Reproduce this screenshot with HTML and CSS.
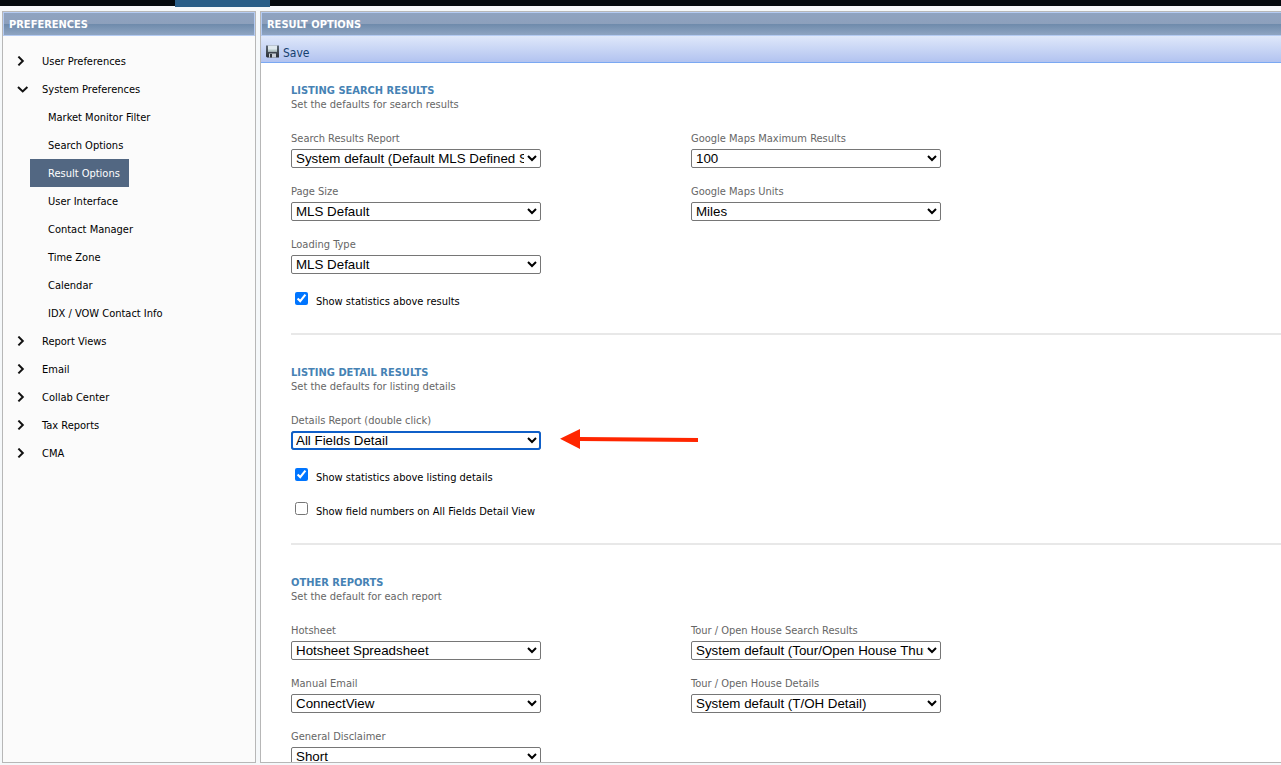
FILE: index.html
```html
<!DOCTYPE html>
<html lang="en">
<head>
    <meta charset="UTF-8">
    <meta name="viewport" content="width=device-width, initial-scale=1.0">
    <title>Preferences - Result Options</title>
    <link rel="stylesheet" href="styles.css">
</head>
<body>
<svg class="sprite" aria-hidden="true">
    <symbol id="chevron-right" viewBox="0 0 12 12">
        <path d="M1.4 0.6 L5.8 5 L1.4 9.4" fill="none" stroke="#111" stroke-width="2"/>
    </symbol>
    <symbol id="chevron-down" viewBox="0 0 12 12">
        <path d="M1 3 L5.7 7.4 L10.4 3" fill="none" stroke="#111" stroke-width="2"/>
    </symbol>
</svg>

<header class="topbar">
    <div class="topbar-tab"></div>
</header>

<div class="layout">
    <aside class="panel sidebar">
        <h2 class="panel-header">PREFERENCES</h2>
        <nav class="menu">
            <a class="menu-item" href="#"><svg class="chevron"><use href="#chevron-right"/></svg>User Preferences</a>
            <a class="menu-item" href="#"><svg class="chevron"><use href="#chevron-down"/></svg>System Preferences</a>
            <div class="submenu">
                <a class="submenu-item" href="#">Market Monitor Filter</a>
                <a class="submenu-item" href="#">Search Options</a>
                <a class="submenu-item active" href="#">Result Options</a>
                <a class="submenu-item" href="#">User Interface</a>
                <a class="submenu-item" href="#">Contact Manager</a>
                <a class="submenu-item" href="#">Time Zone</a>
                <a class="submenu-item" href="#">Calendar</a>
                <a class="submenu-item" href="#">IDX / VOW Contact Info</a>
            </div>
            <a class="menu-item" href="#"><svg class="chevron"><use href="#chevron-right"/></svg>Report Views</a>
            <a class="menu-item" href="#"><svg class="chevron"><use href="#chevron-right"/></svg>Email</a>
            <a class="menu-item" href="#"><svg class="chevron"><use href="#chevron-right"/></svg>Collab Center</a>
            <a class="menu-item" href="#"><svg class="chevron"><use href="#chevron-right"/></svg>Tax Reports</a>
            <a class="menu-item" href="#"><svg class="chevron"><use href="#chevron-right"/></svg>CMA</a>
        </nav>
    </aside>

    <main class="panel content">
        <h2 class="panel-header">RESULT OPTIONS</h2>
        <div class="toolbar">
            <button class="save-button" type="button">
                <svg class="save-icon" viewBox="0 0 13 13" aria-hidden="true">
                    <defs>
                        <linearGradient id="disk" x1="0" y1="0" x2="0" y2="1">
                            <stop offset="0" stop-color="#5b6673"/>
                            <stop offset="1" stop-color="#2b2f36"/>
                        </linearGradient>
                    </defs>
                    <path d="M0 0.5 H13 V12.5 H1 L0 11.5 Z" fill="url(#disk)"/>
                    <rect x="2" y="0.5" width="9" height="6" fill="#dfe8ee"/>
                    <rect x="2" y="4.5" width="9" height="2" fill="#b9c9c9"/>
                    <rect x="3" y="8.5" width="7" height="4" fill="#c9ced6"/>
                    <rect x="4" y="9" width="2" height="3.5" fill="#30353d"/>
                </svg>
                Save
            </button>
        </div>

        <form class="options">
            <section class="section">
                <h3>LISTING SEARCH RESULTS</h3>
                <p class="description">Set the defaults for search results</p>
                <div class="fields">
                    <div class="field">
                        <label for="search-report">Search Results Report</label>
                        <select id="search-report"><option>System default (Default MLS Defined Spreadsheet)</option></select>
                    </div>
                    <div class="field">
                        <label for="maps-max">Google Maps Maximum Results</label>
                        <select id="maps-max"><option>100</option></select>
                    </div>
                    <div class="field">
                        <label for="page-size">Page Size</label>
                        <select id="page-size"><option>MLS Default</option></select>
                    </div>
                    <div class="field">
                        <label for="maps-units">Google Maps Units</label>
                        <select id="maps-units"><option>Miles</option></select>
                    </div>
                    <div class="field">
                        <label for="loading-type">Loading Type</label>
                        <select id="loading-type"><option>MLS Default</option></select>
                    </div>
                </div>
                <div class="checks">
                    <label class="check"><input type="checkbox" checked><span>Show statistics above results</span></label>
                </div>
            </section>

            <section class="section">
                <h3>LISTING DETAIL RESULTS</h3>
                <p class="description">Set the defaults for listing details</p>
                <div class="fields">
                    <div class="field">
                        <label for="details-report">Details Report (double click)</label>
                        <select id="details-report" class="focused"><option>All Fields Detail</option></select>
                        <svg class="arrow" viewBox="0 0 138 20" aria-hidden="true">
                            <path d="M0 9.7 L20 0 V8 L138 9 V13 L20 12 V20 Z" fill="#ff2600"/>
                        </svg>
                    </div>
                </div>
                <div class="checks">
                    <label class="check"><input type="checkbox" checked><span>Show statistics above listing details</span></label>
                    <label class="check"><input type="checkbox"><span>Show field numbers on All Fields Detail View</span></label>
                </div>
            </section>

            <section class="section">
                <h3>OTHER REPORTS</h3>
                <p class="description">Set the default for each report</p>
                <div class="fields">
                    <div class="field">
                        <label for="hotsheet">Hotsheet</label>
                        <select id="hotsheet"><option>Hotsheet Spreadsheet</option></select>
                    </div>
                    <div class="field">
                        <label for="tour-results">Tour / Open House Search Results</label>
                        <select id="tour-results"><option>System default (Tour/Open House Thumbnail)</option></select>
                    </div>
                    <div class="field">
                        <label for="manual-email">Manual Email</label>
                        <select id="manual-email"><option>ConnectView</option></select>
                    </div>
                    <div class="field">
                        <label for="tour-details">Tour / Open House Details</label>
                        <select id="tour-details"><option>System default (T/OH Detail)</option></select>
                    </div>
                    <div class="field">
                        <label for="disclaimer">General Disclaimer</label>
                        <select id="disclaimer"><option>Short</option></select>
                    </div>
                </div>
            </section>
        </form>
    </main>
</div>
</body>
</html>
```
FILE: styles.css
```css
* {
    box-sizing: border-box;
}

body {
    display: flex;
    flex-direction: column;
    height: 100vh;
    margin: 0;
    overflow: hidden;
    font-family: Tahoma, "DejaVu Sans Condensed", "Noto Sans", sans-serif;
    font-size: 11px;
    line-height: 14px;
    color: #000;
    background-color: #f5f8fa;
}

h2, h3, p {
    margin: 0;
    font-size: inherit;
}

.sprite {
    display: none;
}

/* top bar */
.topbar {
    height: 6px;
    flex: none;
    background-color: #03090e;
}

.topbar-tab {
    width: 95px;
    height: 7px;
    margin-left: 175px;
    background-color: #285d87;
}

/* panels */
.layout {
    display: flex;
    flex: 1;
    gap: 4px;
    min-height: 0;
    padding: 5px 0 2px 2px;
}

.panel {
    border: 1px solid #b7b7b7;
    overflow: hidden;
}

.sidebar {
    flex: none;
    width: 254px;
    background-color: #fbfbfb;
}

.content {
    flex: 1;
    border-right: none;
    background-color: #fff;
}

.panel-header {
    height: 24px;
    padding: 5px 5px 3px;
    border: 1px solid #b4cbf2;
    color: #fff;
    background: linear-gradient(#8fa3c0 0, #8da0bc 50%, #6e8aab 50%, #8fa5c2 100%);
}

.content .panel-header {
    border-right: none;
}

/* side menu */
.menu {
    padding-top: 11px;
}

.menu a {
    color: #000;
    text-decoration: none;
}

.menu-item {
    display: flex;
    align-items: center;
    gap: 13px;
    height: 28px;
    padding: 2px 0 0 14px;
}

.chevron {
    width: 12px;
    height: 12px;
}

.submenu {
    display: flex;
    flex-direction: column;
    align-items: flex-start;
    padding-left: 27px;
}

.submenu-item {
    padding: 8px 9px 6px 18px;
}

.menu .active {
    color: #fff;
    background-color: #526782;
}

/* toolbar */
.toolbar {
    height: 27px;
    padding: 7px 5px 0;
    border-bottom: 1px solid #7aa8f2;
    background: linear-gradient(#dfe8fa, #b2c3f0);
}

.save-button {
    display: flex;
    align-items: center;
    gap: 4px;
    padding: 0;
    border: none;
    background: none;
    font-family: inherit;
    font-size: 12px;
    line-height: 20px;
    color: #15406f;
    cursor: pointer;
}

.save-icon {
    width: 13px;
    height: 13px;
    margin-bottom: 4px;
}

/* options form */
.options {
    padding: 21px 0 0 30px;
}

.section {
    margin-bottom: 31px;
    padding-bottom: 14px;
    border-bottom: 2px solid #e8e8e8;
}

.section h3 {
    color: #4682b4;
}

.description {
    margin-bottom: 20px;
    color: #666;
}

.fields {
    display: grid;
    grid-template-columns: 400px 400px;
    row-gap: 17px;
}

.field {
    position: relative;
    display: flex;
    flex-direction: column;
    gap: 3px;
    color: #666;
}

.field select {
    width: 250px;
    height: 19px;
    border: 1px solid #767676;
    border-radius: 2px;
    color: #000;
    background-color: #fff;
}

.field .focused {
    outline: 2px solid #0f5fc8;
    outline-offset: -2px;
    border-radius: 3px;
}

/* callout next to the details report */
.arrow {
    position: absolute;
    left: 269px;
    bottom: 1px;
    width: 138px;
    height: 20px;
}

.checks {
    margin-top: 11px;
}

.check {
    display: flex;
    align-items: center;
    gap: 8px;
    height: 34px;
}

.check input {
    width: 13px;
    height: 13px;
    margin: 0 0 7px 4px;
    accent-color: #0075ff;
}
```
